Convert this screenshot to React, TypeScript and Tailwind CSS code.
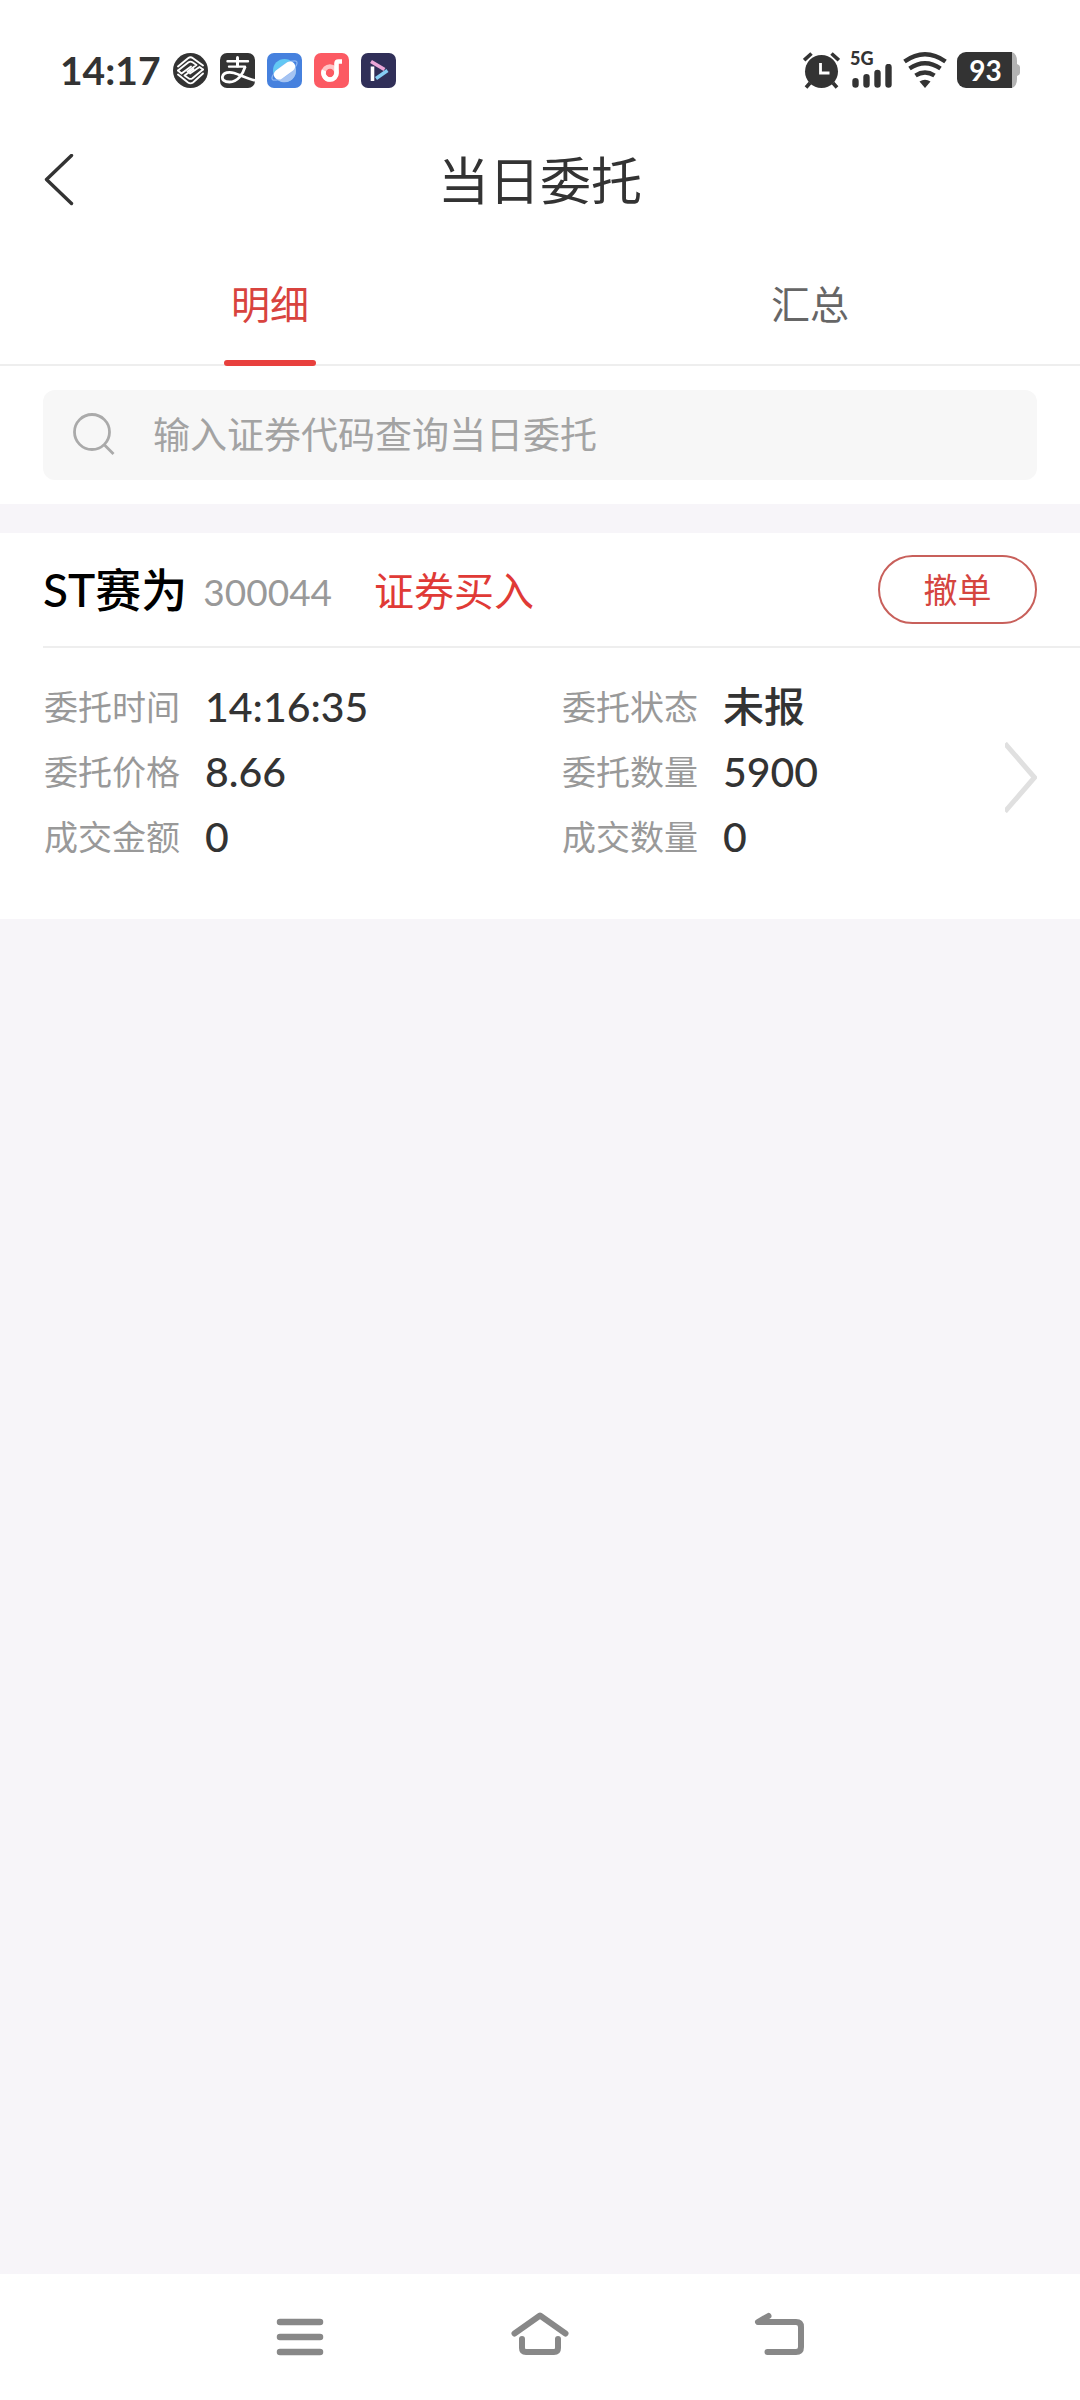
import React, { useState } from "react";

type Field = { label: string; value: string };

const leftFields: Field[] = [
  { label: "委托时间", value: "14:16:35" },
  { label: "委托价格", value: "8.66" },
  { label: "成交金额", value: "0" },
];

const rightFields: Field[] = [
  { label: "委托状态", value: "未报" },
  { label: "委托数量", value: "5900" },
  { label: "成交数量", value: "0" },
];

const tabs = ["明细", "汇总"];

function StatusBar() {
  return (
    <div className="flex items-center justify-between h-[140px] px-[60px] text-[#333]">
      <div className="flex items-center gap-3">
        <span className="text-[39px] leading-none font-bold">14:17</span>

        {/* China Mobile */}
        <svg className="w-[35px] h-[35px]" viewBox="0 0 35 35" fill="none">
          <circle cx="17.5" cy="17.5" r="17.5" fill="#333" />
          <g stroke="#fff" strokeWidth="1.9" strokeLinejoin="round" strokeLinecap="round">
            <path d="M5 13.5 15 5.2q2.5-1.8 5 0L30 12.5" />
            <path d="M5 17.5 15.5 9.3q2-1.4 4 0L23.5 12l-9 6.500" />
            <path d="M30 16.5 26.5 14 17 20.5" />
            <path d="M5 17.5 8.5 20.5 18 13.5" />
            <path d="M30 16.5 19.5 25.2q-2 1.4-4 0L11.5 22.5l9-6.5" />
            <path d="M5 21.5 15 29.5q2.5 1.8 5 0L30 20.5" />
          </g>
        </svg>

        {/* Alipay */}
        <svg className="w-[35px] h-[35px]" viewBox="0 0 35 35" fill="none">
          <rect width="35" height="35" rx="7" fill="#333" />
          <g stroke="#fff" strokeLinecap="round">
            <path d="M17.5 4.5V13" strokeWidth="3" />
            <path d="M7.5 8.2h20.5M9 13.6h16" strokeWidth="2.4" />
            <path
              d="M25.2 13.6C23 21 17.5 29 9.5 29 4 29 1.8 26.5 2.5 23.5 3.5 19.5 9 18.5 14 20 20 21.8 27 25.5 35 27.5"
              strokeWidth="2.8"
              strokeLinecap="butt"
            />
          </g>
        </svg>

        {/* Browser */}
        <svg className="w-[35px] h-[35px]" viewBox="0 0 35 35" fill="none">
          <rect width="35" height="35" rx="7" fill="#4681de" />
          <circle cx="17.5" cy="17.5" r="11.5" fill="#63c8f4" />
          <path d="M7.5 23.5 27.5 12A11.5 11.5 0 0 1 7.5 23.5Z" fill="#a5c3f2" />
          <ellipse cx="17.5" cy="17.5" rx="15" ry="5" transform="rotate(-36 17.5 17.5)" stroke="#8bb5f2" strokeWidth="1.3" />
          <rect x="5.5" y="12.5" width="24" height="10" rx="5" transform="rotate(-36 17.5 17.5)" fill="#fff" />
        </svg>

        {/* Music */}
        <svg className="w-[35px] h-[35px]" viewBox="0 0 35 35" fill="none">
          <rect width="35" height="35" rx="7" fill="#fc5a63" />
          <circle cx="16" cy="20" r="6.5" stroke="#ffc4c7" strokeWidth="4.6" />
          <path d="M10 17.500A6.500 6.500 0 0 0 16 26.500 6.500 6.500 0 0 0 22.500 20V10.500q0-2 2-2H28" stroke="#fff" strokeWidth="4.600" />
        </svg>

        {/* Video */}
        <svg className="w-[35px] h-[35px]" viewBox="0 0 35 35" fill="none">
          <rect width="35" height="35" rx="7" fill="#302f58" />
          <g strokeWidth="3.6">
            <path d="M11.5 13.5V28" stroke="#fff" />
            <path d="M10 8.5 23.5 16.5" stroke="#eba6d6" />
            <path d="M26.5 17.5 15 25.5" stroke="#86cdf3" />
          </g>
        </svg>
      </div>

      <div className="flex items-center gap-[10px]">
        {/* Alarm */}
        <svg className="w-[37px] h-[37px]" viewBox="0 0 37 37" fill="none">
          <circle cx="18.5" cy="19.5" r="16.5" fill="#333" />
          <g stroke="#333" strokeWidth="3.6">
            <path d="M1.2 8.2 8.5 1.5M35.8 8.2 28.5 1.5" />
            <path d="M7 31 3 35.5M30 31l4 4.5" />
          </g>
          <path d="M17.5 11v10h9" stroke="#fff" strokeWidth="2.8" />
        </svg>

        {/* Signal */}
        <div className="flex flex-col w-[43px]">
          <span className="text-[18px] leading-[12px] font-black">5G</span>
          <svg className="w-[43px] h-[24px]" viewBox="0 0 43 24" stroke="#333" strokeWidth="6.4" strokeLinecap="round">
            <path d="M5.5 17.2v3.400M16.5 13.2v7.4M27.5 9v11.6M38.5 3v17.6" />
          </svg>
        </div>

        {/* Wifi */}
        <svg className="w-[44px] h-[36px]" viewBox="0 0 44 36" fill="none">
          <g stroke="#333" strokeWidth="4.4">
            <path d="M1.500 9.500Q22-5 42.500 9.500" />
            <path d="M6.500 16.500Q22 6 37.500 16.500" />
            <path d="M12.500 23.500Q22 17.500 31.500 23.500" />
          </g>
          <path d="M22 36 16.500 29.500Q22 26 27.500 29.500Z" fill="#333" />
        </svg>

        {/* Battery */}
        <div className="flex items-center">
          <div className="flex items-center justify-center w-[55px] h-[36px] pl-0.5 bg-[#333] rounded-l-[9px] text-white text-[28px] leading-none font-bold">
            93
          </div>
          <svg className="w-[8px] h-[36px]" viewBox="0 0 8 36">
            <path d="M0 0q5 2 5 9v3q3 1 3 3v6q0 2-3 3v3q0 7-5 9Z" fill="#b3b3b3" />
          </svg>
        </div>
      </div>
    </div>
  );
}

function FieldList({ fields }: { fields: Field[] }) {
  return (
    <dl className="flex flex-col">
      {fields.map((field) => (
        <div key={field.label} className="flex items-center gap-[25px] h-[65px]">
          <dt className="text-[34px] text-[#999]">{field.label}</dt>
          <dd className="text-[41px] font-medium text-[#333]">{field.value}</dd>
        </div>
      ))}
    </dl>
  );
}

export default function App() {
  const [activeTab, setActiveTab] = useState(tabs[0]);
  const [keyword, setKeyword] = useState("");

  return (
    <div className="min-h-screen flex flex-col bg-[#f7f5f9] font-['Lato','Noto_Sans_CJK_SC',sans-serif]">
      <div className="bg-white">
        <StatusBar />

        {/* Title */}
        <header className="grid grid-cols-[1fr_auto_1fr] items-center h-[80px] px-11">
          <button type="button" aria-label="返回" className="justify-self-start cursor-pointer">
            <svg className="w-[30px] h-[52px]" viewBox="0 0 30 52" fill="none">
              <path d="M27.5 1.5 2.5 25.500l25 24" stroke="#333" strokeWidth="3.4" strokeLinecap="round" strokeLinejoin="round" />
            </svg>
          </button>
          <h1 className="text-[51px] leading-none text-[#333]">当日委托</h1>
        </header>

        {/* Tabs */}
        <div role="tablist" className="grid grid-cols-2 h-[146px] border-b-2 border-[#eee]">
          {tabs.map((tab) => (
            <button
              key={tab}
              type="button"
              role="tab"
              aria-selected={tab === activeTab}
              onClick={() => setActiveTab(tab)}
              className={`relative pt-6 text-[39px] cursor-pointer ${tab === activeTab ? "text-[#d8433e]" : "text-[#666]"}`}
            >
              {tab}
              {tab === activeTab && (
                <span className="absolute -bottom-0.5 left-1/2 -translate-x-1/2 w-[92px] h-1.5 rounded-full bg-[#e8403d]"></span>
              )}
            </button>
          ))}
        </div>

        {/* Search */}
        <div className="px-[43px] py-6">
          <label className="flex items-center gap-[38px] h-[90px] pl-[30px] pr-6 rounded-xl bg-[#f7f7f7]">
            <svg className="w-[42px] h-[44px] shrink-0" viewBox="0 0 42 44" fill="none" stroke="#aaa" strokeWidth="2.8">
              <circle cx="19" cy="19" r="17.5" />
              <path d="M31 31.500 40.500 41" />
            </svg>
            <input
              type="text"
              aria-label="输入证券代码查询当日委托"
              value={keyword}
              onChange={(e) => setKeyword(e.target.value)}
              placeholder="输入证券代码查询当日委托"
              className="flex-1 min-w-0 bg-transparent text-[37px] text-[#333] placeholder-[#a3a3a3] focus:outline-none"
            />
          </label>
        </div>
      </div>

      {/* Order */}
      <main className="flex-1 pt-[29px]">
        <article className="bg-white">
          <div className="pl-[43px]">
            <div className="flex items-center h-[115px] pr-[43px] border-b-2 border-[#eee]">
              <h2 className="text-[46px] font-medium text-black">ST赛为</h2>
              <span className="ml-4 pt-1 text-[37px] text-[#999]">300044</span>
              <span className="ml-[42px] pt-0.5 text-[40px] text-[#e03a36]">证券买入</span>
              <button
                type="button"
                className="ml-auto w-[159px] h-[69px] rounded-full border-2 border-[#c8605b] text-[34px] text-[#d5453f] cursor-pointer"
              >
                撤单
              </button>
            </div>
          </div>

          <div className="grid grid-cols-2 pl-11 pt-[26px] pb-[50px]">
            <FieldList fields={leftFields} />
            <div className="flex items-center justify-between pr-[43px]">
              <FieldList fields={rightFields} />
              <button type="button" aria-label="查看详情" className="pt-3 cursor-pointer">
                <svg className="w-[32px] h-[71px]" viewBox="0 0 32 71" fill="none">
                  <path d="M0 1.5 29.5 35.5 0 69.5" stroke="#e0e0e0" strokeWidth="5" />
                </svg>
              </button>
            </div>
          </div>
        </article>
      </main>

      {/* System navigation */}
      <nav className="flex items-center justify-center gap-[180px] h-[126px] pb-1.5 bg-white">
        <button type="button" aria-label="最近任务" className="cursor-pointer">
          <svg className="w-[60px] h-[46px]" viewBox="0 0 60 46" fill="none" stroke="#888" strokeWidth="6.5" strokeLinecap="round">
            <path d="M10 11h40M10 26h40M10 41h40" />
          </svg>
        </button>
        <button type="button" aria-label="主屏幕" className="cursor-pointer">
          <svg className="w-[60px] h-[46px]" viewBox="0 0 60 46" fill="none" stroke="#888" strokeWidth="6" strokeLinecap="round" strokeLinejoin="round">
            <path d="M4.5 22.5 30 4.500l25.5 18" />
            <path d="M12 28v9q0 4 4 4h28q4 0 4-4v-9" />
          </svg>
        </button>
        <button type="button" aria-label="返回上一页" className="cursor-pointer">
          <svg className="w-[60px] h-[46px]" viewBox="0 0 60 46" fill="none" stroke="#888" strokeWidth="6" strokeLinecap="round" strokeLinejoin="round">
            <path d="M18.5 5 8 11h38q5 0 5 5v20q0 5-5 5H17.5" />
          </svg>
        </button>
      </nav>
    </div>
  );
}
